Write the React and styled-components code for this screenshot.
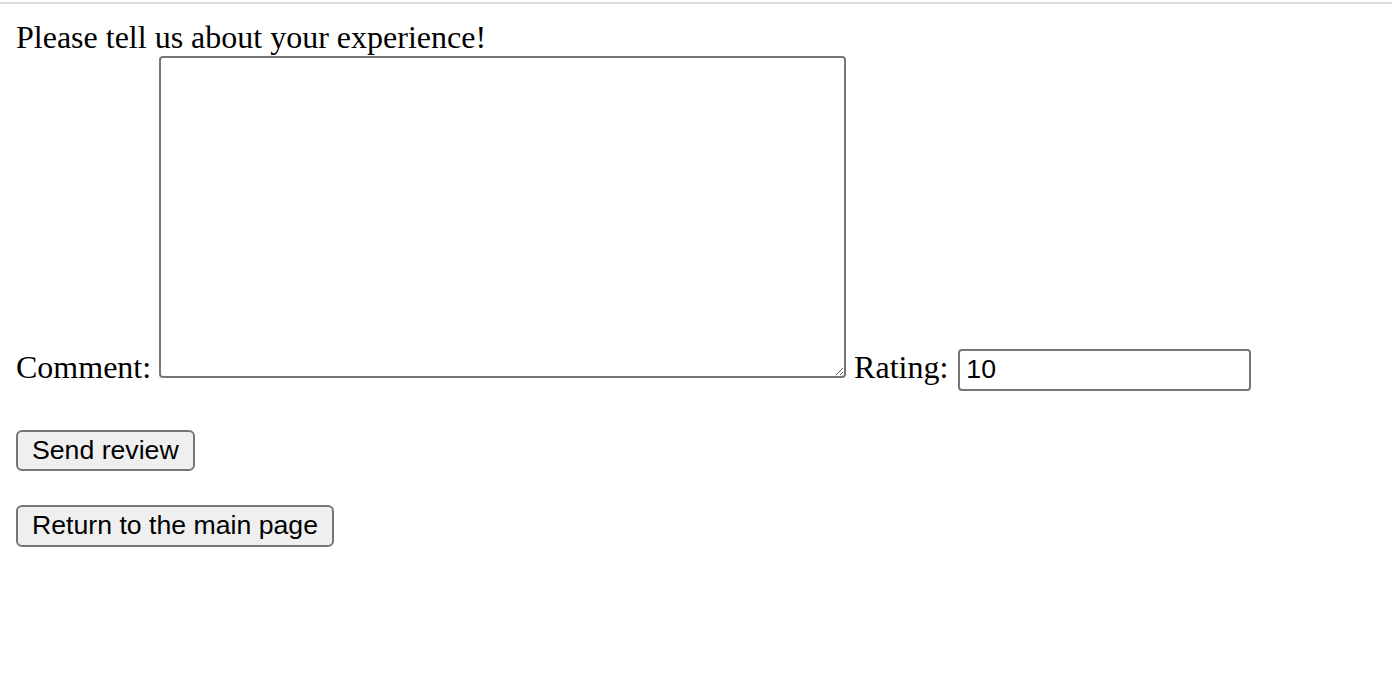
import React, { useState } from "react";
import styled, { createGlobalStyle } from "styled-components";

const GlobalStyle = createGlobalStyle`
  html, body {
    margin: 0;
    padding: 0;
    background: #ffffff;
  }
  body {
    font-family: "Liberation Serif", "Times New Roman", serif;
    font-size: 32px;
    color: #000;
  }
`;

const TopRule = styled.div`
  height: 2px;
  margin-top: 2px;
  background: #dcdcdc;
`;

const Page = styled.div`
  padding: 15px 16px 0;
`;

const Intro = styled.div`
  line-height: normal;
`;

const FieldLine = styled.div`
  line-height: normal;
`;

const Comment = styled.textarea`
  box-sizing: border-box;
  width: 687px;
  height: 322px;
  margin: 0;
  vertical-align: baseline;
  border: 2px solid #767676;
  border-radius: 4px;
  padding: 4px;
  font-family: "Liberation Mono", monospace;
  font-size: 26px;
  background: #fff;
`;

const RatingInput = styled.input`
  box-sizing: border-box;
  width: 293px;
  height: 42px;
  margin: 0 0 0 2px;
  padding: 2px 6px;
  vertical-align: baseline;
  border: 2px solid #767676;
  border-radius: 4px;
  font-family: "Liberation Sans", Arial, sans-serif;
  font-size: 26.67px;
  color: #000;
  background: #fff;
`;

const Actions = styled.div`
  display: flex;
  flex-direction: column;
  align-items: flex-start;
  gap: 34px;
  margin-top: 39px;
`;

const Button = styled.button`
  box-sizing: border-box;
  height: ${(p) => (p.$tall ? 42 : 41)}px;
  margin: 0;
  padding: 0 14px;
  border: 2px solid #767676;
  border-radius: 6px;
  background: #efefef;
  font-family: "Liberation Sans", Arial, sans-serif;
  font-size: 26.67px;
  color: #000;
  cursor: pointer;
`;

export default function App() {
  const [comment, setComment] = useState("");
  const [rating, setRating] = useState("10");

  return (
    <>
      <GlobalStyle />
      <TopRule />
      <Page>
        <form onSubmit={(e) => e.preventDefault()}>
          <Intro>Please tell us about your experience!</Intro>
          <FieldLine>
            Comment:{" "}
            <Comment value={comment} onChange={(e) => setComment(e.target.value)} />{" "}
            Rating:{" "}
            <RatingInput type="text" value={rating} onChange={(e) => setRating(e.target.value)} />
          </FieldLine>
          <Actions>
            <Button type="submit">Send review</Button>
            <Button type="button" $tall>Return to the main page</Button>
          </Actions>
        </form>
      </Page>
    </>
  );
}
